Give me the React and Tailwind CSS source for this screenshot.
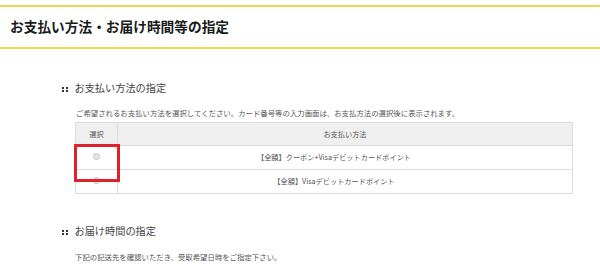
export default function App() {
  const Dots = () => (
    <div className="grid grid-cols-2 gap-x-[1.5px] gap-y-[1.5px] mr-[7px] mt-[3px]">
      <span className="w-[2px] h-[2px] bg-[#333]" />
      <span className="w-[2px] h-[2px] bg-[#333]" />
      <span className="w-[2px] h-[2px] bg-[#333]" />
      <span className="w-[2px] h-[2px] bg-[#333]" />
    </div>
  );

  const Radio = () => (
    <span className="inline-block w-[7px] h-[7px] rounded-full border border-[#c4c4c4] bg-[#e6e6e6]" />
  );

  return (
    <div
      className="w-[600px] h-[266px] bg-white overflow-hidden"
      style={{ fontFamily: '"Noto Sans CJK JP", "Noto Sans", sans-serif' }}
    >
      {/* Page title */}
      <div className="pt-[5px]">
        <div className="h-[44px] border-y-2 border-[#f1d44f] flex items-center pl-[10px]">
          <h1 className="text-[13.7px] font-bold text-[#1a1a1a] leading-none">
            お支払い方法・お届け時間等の指定
          </h1>
        </div>
      </div>

      {/* Payment method */}
      <div className="pl-[62px]">
        <div className="mt-[31px] h-[16px] flex items-center">
          <Dots />
          <span className="text-[10.2px] text-[#444] leading-none">お支払い方法の指定</span>
        </div>
        <p className="mt-[12px] h-[10px] pl-[14px] text-[7.4px] text-[#555] leading-[10px] whitespace-nowrap">
          ご希望されるお支払い方法を選択してください。カード番号等の入力画面は、お支払方法の選択後に表示されます。
        </p>

        <div className="relative mt-[4px] ml-[13px] w-[498px]">
          <table className="w-full border-collapse text-[7.2px] text-[#555]">
            <thead>
              <tr className="h-[23px] bg-[#efefef]">
                <th className="w-[42px] border border-[#dcdcdc] font-normal">選択</th>
                <th className="border border-[#dcdcdc] font-normal">お支払い方法</th>
              </tr>
            </thead>
            <tbody>
              <tr className="h-[24px]">
                <td className="border border-[#dcdcdc] text-center">
                  <Radio />
                </td>
                <td className="border border-[#dcdcdc] text-center pr-[22px]">
                  【全額】クーポン+Visaデビットカードポイント
                </td>
              </tr>
              <tr className="h-[24px]">
                <td className="border border-[#dcdcdc] text-center">
                  <Radio />
                </td>
                <td className="border border-[#dcdcdc] text-center pr-[22px]">
                  【全額】Visaデビットカードポイント
                </td>
              </tr>
            </tbody>
          </table>
          {/* highlight box */}
          <div className="absolute left-[-1px] top-[22px] w-[46px] h-[38px] border-[3px] border-[#e0202b]" />
        </div>

        {/* Delivery time */}
        <div className="mt-[29px] h-[16px] flex items-center">
          <Dots />
          <span className="text-[10.2px] text-[#444] leading-none">お届け時間の指定</span>
        </div>
        <p className="mt-[13px] h-[10px] pl-[13px] text-[7.4px] text-[#555] leading-[10px] whitespace-nowrap">
          下記の記送先を確認いただき、受取希望日時をご指定下さい。
        </p>
      </div>
    </div>
  );
}
